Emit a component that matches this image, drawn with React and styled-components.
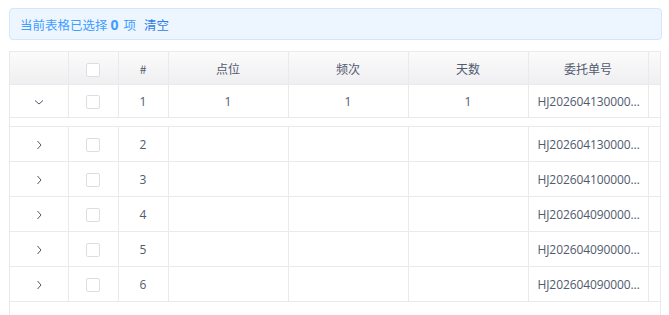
import React from 'react';
import styled, { createGlobalStyle } from 'styled-components';

const Global = createGlobalStyle`
  body {
    margin: 0;
    background: #fff;
    font-family: "Open Sans", "Noto Sans CJK SC", sans-serif;
  }
`;

const Page = styled.div`
  padding: 8px 7px 0 9px;
  height: 315px;
  box-sizing: border-box;
  overflow: hidden;
`;

const Alert = styled.div`
  display: flex;
  align-items: center;
  height: 32px;
  box-sizing: border-box;
  padding: 0 10px;
  border: 1px solid #d4e7fc;
  border-radius: 4px;
  background: #edf5ff;
  color: #409eff;
  font-size: 12.5px;
  font-family: "Noto Sans CJK SC", sans-serif;
  width: 653px;
`;

const Count = styled.b`
  font-family: "Open Sans", sans-serif;
  font-size: 14px;
  font-weight: 700;
  margin: 0 5px 0 3px;
`;

const ClearLink = styled.a`
  color: #2d7fe6;
  margin-left: 8px;
  cursor: pointer;
`;

const TableWrap = styled.div`
  margin-top: 11px;
  width: 652px;
  height: 270px;
  border-left: 1px solid #e8eaec;
  border-right: 1px solid #e8eaec;
  border-top: 1px solid #e8eaec;
  box-sizing: border-box;
  overflow: hidden;
`;

const Table = styled.table`
  border-collapse: collapse;
  table-layout: fixed;
  width: 650px;
  font-size: 12px;
  color: #515a6e;
`;

const Th = styled.th`
  height: 32px;
  padding: 0;
  font-weight: 400;
  font-family: "Noto Sans CJK SC", sans-serif;
  background: linear-gradient(#fbfbfb, #efeff1);
  border-right: 1px solid #e8eaec;
  border-bottom: 1px solid #e8eaec;
  text-align: center;
  &:last-child { border-right: none; }
`;

const Td = styled.td`
  height: ${p => (p.$h ? p.$h : 34)}px;
  padding: ${p => (p.$left ? '0 6px 0 9px' : '0')};
  letter-spacing: ${p => (p.$left ? '-0.1px' : 'normal')};
  text-align: ${p => (p.$left ? 'left' : 'center')};
  border-right: 1px solid #e8eaec;
  border-bottom: 1px solid #e8eaec;
  white-space: nowrap;
  overflow: hidden;
  text-overflow: ellipsis;
  &:last-child { border-right: none; }
`;

const ExpandTd = styled.td`
  height: 8px;
  padding: 0;
  border-bottom: 1px solid #e8eaec;
`;

const Box = styled.span`
  display: inline-block;
  width: 12px;
  height: 12px;
  border: 1px solid #dcdee2;
  border-radius: 2px;
  background: #fff;
  vertical-align: middle;
`;

const Arrow = ({ open }) => (
  <svg width="12" height="12" viewBox="0 0 12 12" style={{ verticalAlign: 'middle' }}>
    {open ? (
      <path d="M2 4.5 L6 8 L10 4.5" fill="none" stroke="#515a6e" strokeWidth="1" />
    ) : (
      <path d="M4.5 2 L8 6 L4.5 10" fill="none" stroke="#515a6e" strokeWidth="1" />
    )}
  </svg>
);

const rows = [
  { n: 1, a: '1', b: '1', c: '1', code: 'HJ20260413000012', open: true },
  { n: 2, code: 'HJ20260413000011' },
  { n: 3, code: 'HJ20260410000015' },
  { n: 4, code: 'HJ20260409000013' },
  { n: 5, code: 'HJ20260409000012' },
  { n: 6, code: 'HJ20260409000011' },
];

export default function App() {
  return (
    <Page>
      <Global />
      <Alert>
        当前表格已选择<Count>0</Count>项<ClearLink>清空</ClearLink>
      </Alert>
      <TableWrap>
        <Table>
          <colgroup>
            <col style={{ width: 58 }} />
            <col style={{ width: 50 }} />
            <col style={{ width: 50 }} />
            <col style={{ width: 120 }} />
            <col style={{ width: 120 }} />
            <col style={{ width: 120 }} />
            <col style={{ width: 120 }} />
            <col style={{ width: 12 }} />
          </colgroup>
          <thead>
            <tr>
              <Th />
              <Th><Box /></Th>
              <Th>#</Th>
              <Th>点位</Th>
              <Th>频次</Th>
              <Th>天数</Th>
              <Th>委托单号</Th>
              <Th />
            </tr>
          </thead>
          <tbody>
            {rows.map(r => (
              <React.Fragment key={r.n}>
                <tr>
                  <Td $h={r.open ? 32 : 34}><Arrow open={r.open} /></Td>
                  <Td $h={r.open ? 32 : 34}><Box /></Td>
                  <Td $h={r.open ? 32 : 34}>{r.n}</Td>
                  <Td $h={r.open ? 32 : 34}>{r.a}</Td>
                  <Td $h={r.open ? 32 : 34}>{r.b}</Td>
                  <Td $h={r.open ? 32 : 34}>{r.c}</Td>
                  <Td $h={r.open ? 32 : 34} $left>{r.code}</Td>
                  <Td $h={r.open ? 32 : 34} />
                </tr>
                {r.open && (
                  <tr>
                    <ExpandTd colSpan={8} />
                  </tr>
                )}
              </React.Fragment>
            ))}
          </tbody>
        </Table>
      </TableWrap>
    </Page>
  );
}
